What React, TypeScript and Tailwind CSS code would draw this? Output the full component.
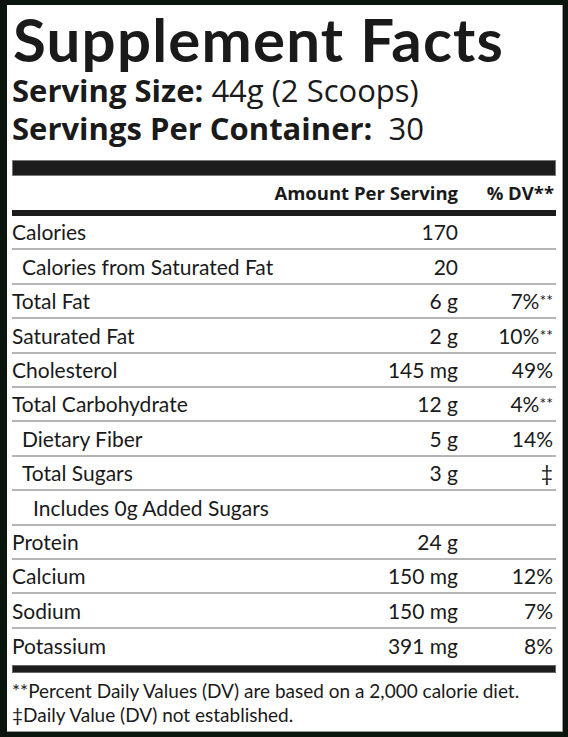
import React from "react";

type Row = { label: string; indent?: number; amt?: string; dv?: string };

const rows: Row[] = [
  { label: "Calories", amt: "170" },
  { label: "Calories from Saturated Fat", indent: 1, amt: "20" },
  { label: "Total Fat", amt: "6 g", dv: "7%**" },
  { label: "Saturated Fat", amt: "2 g", dv: "10%**" },
  { label: "Cholesterol", amt: "145 mg", dv: "49%" },
  { label: "Total Carbohydrate", amt: "12 g", dv: "4%**" },
  { label: "Dietary Fiber", indent: 1, amt: "5 g", dv: "14%" },
  { label: "Total Sugars", indent: 1, amt: "3 g", dv: "‡" },
  { label: "Includes 0g Added Sugars", indent: 2 },
  { label: "Protein", amt: "24 g" },
  { label: "Calcium", amt: "150 mg", dv: "12%" },
  { label: "Sodium", amt: "150 mg", dv: "7%" },
  { label: "Potassium", amt: "391 mg", dv: "8%" },
];

function DvText({ t }: { t: string }) {
  if (t.endsWith("**")) {
    return (
      <span>
        {t.slice(0, -2)}
        <span className="text-[16px] relative top-[-3px]">**</span>
      </span>
    );
  }
  return <span>{t}</span>;
}

const openSans = { fontFamily: "'Open Sans', 'Noto Sans', sans-serif" };

export default function App() {
  return (
    <div
      className="w-[568px] h-[737px] bg-[#0a150d] pt-[5px] pl-[7px]"
      style={{ fontFamily: "Lato, 'Open Sans', sans-serif" }}
    >
      <div className="w-[556px] h-[727px] bg-white border-r border-b border-[#9a9a9a] pl-[5px] pr-[6px] text-[#1a1a1a]">
        <div className="text-[60px] font-bold leading-[66px] pt-[1px] tracking-[1.2px] pl-[1px] whitespace-nowrap">
          Supplement Facts
        </div>
        <div className="text-[31px] leading-[36px] whitespace-nowrap" style={openSans}>
          <span className="font-bold">Serving Size:</span> 44g (2 Scoops)
        </div>
        <div className="text-[31px] leading-[36px] mt-[2px] whitespace-nowrap" style={openSans}>
          <span className="font-bold">Servings Per Container:</span>&nbsp; 30
        </div>
        <div className="mt-[14px] h-[16px] bg-[#1c1c1c] border border-[#777]" />
        <div className="flex items-center h-[34px] text-[18.5px] font-bold pr-[2px]" style={openSans}>
          <div className="flex-1" />
          <div className="w-[220px] text-right whitespace-nowrap">Amount Per Serving</div>
          <div className="w-[96px] text-right whitespace-nowrap">% DV**</div>
        </div>
        <div className="h-[6px] bg-[#1c1c1c]" />
        {rows.map((r, i) => (
          <div
            key={i}
            className={`flex items-center h-[34.4px] text-[21px] pr-[3px] ${
              i < rows.length - 1 ? "border-b-2 border-[#b5b5b5]" : ""
            }`}
          >
            <div
              className={`flex-1 whitespace-nowrap ${
                r.indent === 1 ? "pl-[10px]" : r.indent === 2 ? "pl-[21px]" : ""
              }`}
            >
              {r.label}
            </div>
            <div className="w-[120px] text-right whitespace-nowrap">{r.amt ?? ""}</div>
            <div className="w-[95px] text-right whitespace-nowrap">{r.dv ? <DvText t={r.dv} /> : ""}</div>
          </div>
        ))}
        <div className="mt-[2px] h-[8px] bg-[#1c1c1c] border border-[#666]" />
        <div className="text-[19px] leading-[24px] mt-[6px] whitespace-nowrap">
          <div>**Percent Daily Values (DV) are based on a 2,000 calorie diet.</div>
          <div>‡Daily Value (DV) not established.</div>
        </div>
      </div>
    </div>
  );
}
